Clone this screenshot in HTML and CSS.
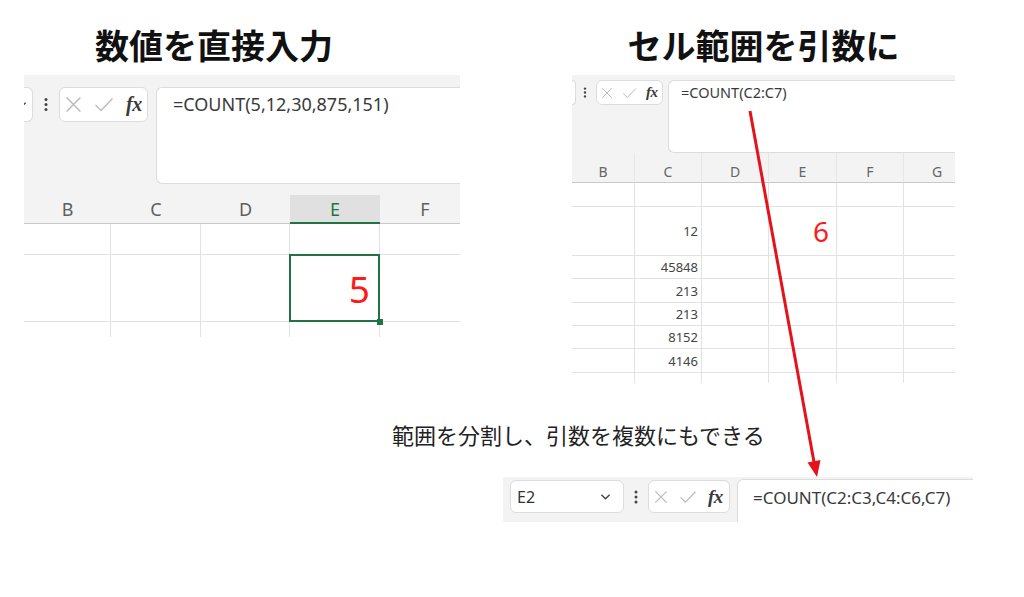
FILE: index.html
```html
<!DOCTYPE html>
<html lang="ja">
<head>
    <meta charset="UTF-8">
    <meta name="viewport" content="width=device-width, initial-scale=1.0">
    <title>COUNT関数</title>
    <link rel="stylesheet" href="styles.css">
</head>
<body>
<div class="page">

    <div class="top">
        <!-- Left: direct values -->
        <section class="col col-left">
            <h2 class="title title-left">数値を直接入力</h2>
            <div class="sheet sheet-lg">
                <div class="fbar">
                    <div class="box stub"><svg class="chev" viewBox="0 0 12 8"><path d="M1.5 1.5 L6 6 L10.5 1.5"/></svg></div>
                    <div class="dots"><svg viewBox="0 0 4 14"><circle cx="2" cy="2" r="1.5"/><circle cx="2" cy="7" r="1.5"/><circle cx="2" cy="12" r="1.5"/></svg></div>
                    <div class="box tools">
                        <svg class="ic-x" viewBox="0 0 16 16"><path d="M1.5 1.5 L14.5 14.5 M14.5 1.5 L1.5 14.5"/></svg>
                        <svg class="ic-ok" viewBox="0 0 20 16"><path d="M1.5 8.5 L7 14 L18.5 2"/></svg>
                        <span class="fx">fx</span>
                    </div>
                    <div class="box formula">=COUNT(5,12,30,875,151)</div>
                </div>
                <div class="heads">
                    <div class="head">B</div>
                    <div class="head">C</div>
                    <div class="head">D</div>
                    <div class="head on">E</div>
                    <div class="head">F</div>
                </div>
                <div class="cells">
                    <div class="cell"></div><div class="cell"></div><div class="cell"></div><div class="cell"></div><div class="cell"></div>
                    <div class="cell"></div><div class="cell"></div><div class="cell"></div><div class="cell sel"><span class="big">5</span></div><div class="cell"></div>
                    <div class="cell last"></div><div class="cell last"></div><div class="cell last"></div><div class="cell last"></div><div class="cell last"></div>
                </div>
            </div>
        </section>

        <!-- Right: cell range -->
        <section class="col col-right">
            <h2 class="title">セル範囲を引数に</h2>
            <div class="sheet sheet-sm">
                <div class="fbar">
                    <div class="box stub"></div>
                    <div class="dots"><svg viewBox="0 0 4 14"><circle cx="2" cy="2" r="1.5"/><circle cx="2" cy="7" r="1.5"/><circle cx="2" cy="12" r="1.5"/></svg></div>
                    <div class="box tools">
                        <svg class="ic-x" viewBox="0 0 16 16"><path d="M1.5 1.5 L14.5 14.5 M14.5 1.5 L1.5 14.5"/></svg>
                        <svg class="ic-ok" viewBox="0 0 20 16"><path d="M1.5 8.5 L7 14 L18.5 2"/></svg>
                        <span class="fx">fx</span>
                    </div>
                    <div class="box formula">=COUNT(C2:C7)</div>
                </div>
                <div class="heads">
                    <div class="head">B</div>
                    <div class="head">C</div>
                    <div class="head">D</div>
                    <div class="head">E</div>
                    <div class="head">F</div>
                    <div class="head">G</div>
                </div>
                <div class="cells">
                    <div class="cell"></div><div class="cell"></div><div class="cell"></div><div class="cell"></div><div class="cell"></div><div class="cell"></div>
                    <div class="cell"></div><div class="cell num">12</div><div class="cell"></div><div class="cell"><span class="mid">6</span></div><div class="cell"></div><div class="cell"></div>
                    <div class="cell"></div><div class="cell num">45848</div><div class="cell"></div><div class="cell"></div><div class="cell"></div><div class="cell"></div>
                    <div class="cell"></div><div class="cell num">213</div><div class="cell"></div><div class="cell"></div><div class="cell"></div><div class="cell"></div>
                    <div class="cell"></div><div class="cell num">213</div><div class="cell"></div><div class="cell"></div><div class="cell"></div><div class="cell"></div>
                    <div class="cell"></div><div class="cell num">8152</div><div class="cell"></div><div class="cell"></div><div class="cell"></div><div class="cell"></div>
                    <div class="cell"></div><div class="cell num">4146</div><div class="cell"></div><div class="cell"></div><div class="cell"></div><div class="cell"></div>
                    <div class="cell last"></div><div class="cell last"></div><div class="cell last"></div><div class="cell last"></div><div class="cell last"></div><div class="cell last"></div>
                </div>
            </div>
        </section>
    </div>

    <p class="caption">範囲を分割し、引数を複数にもできる</p>

    <!-- Bottom formula bar -->
    <div class="fbar bar">
        <div class="box namebox">
            <span>E2</span>
            <svg class="chev" viewBox="0 0 12 8"><path d="M1.5 1.5 L6 6 L10.5 1.5"/></svg>
        </div>
        <div class="dots"><svg viewBox="0 0 4 14"><circle cx="2" cy="2" r="1.5"/><circle cx="2" cy="7" r="1.5"/><circle cx="2" cy="12" r="1.5"/></svg></div>
        <div class="box tools">
            <svg class="ic-x" viewBox="0 0 16 16"><path d="M1.5 1.5 L14.5 14.5 M14.5 1.5 L1.5 14.5"/></svg>
            <svg class="ic-ok" viewBox="0 0 20 16"><path d="M1.5 8.5 L7 14 L18.5 2"/></svg>
            <span class="fx">fx</span>
        </div>
        <div class="box formula">=COUNT(C2:C3,C4:C6,C7)</div>
    </div>

    <!-- Red arrow drawn over the sheet -->
    <svg class="arrow" viewBox="0 0 1024 597">
        <line x1="750" y1="111" x2="814" y2="462"/>
        <polygon points="817,477 820.5,460 807.5,462.5"/>
    </svg>
</div>
</body>
</html>
```

FILE: styles.css
```css
/* General */
* {
    margin: 0;
    padding: 0;
    box-sizing: border-box;
}

body {
    background: #fff;
    font-family: "Noto Sans", "Noto Sans CJK JP", sans-serif;
    color: #222;
}

.page {
    position: relative;
    width: 1024px;
    height: 597px;
    overflow: hidden;
    padding-top: 28px;
}

.top {
    display: flex;
    align-items: flex-start;
}

.col-left {
    margin-left: 24px;
    width: 436px;
}

.col-right {
    margin-left: 112px;
    width: 383px;
}

.title {
    font-family: "Noto Sans CJK JP", sans-serif;
    font-weight: 700;
    font-size: 34px;
    line-height: 34px;
    color: #111;
    text-align: center;
    margin-bottom: 13px;
}

.title-left {
    padding-right: 56px;
}

/* Formula bar pieces */
.sheet {
    background: #f3f3f3;
    overflow: hidden;
}

.fbar {
    display: flex;
    align-items: flex-start;
}

.box {
    background: #fff;
    border: 1px solid #dcdcdc;
    border-radius: 6px;
}

.stub {
    border-left: none;
    border-radius: 0 6px 6px 0;
    overflow: hidden;
    display: flex;
    align-items: center;
}

.stub .chev {
    flex: none;
    margin-left: -8px;
}

.dots {
    display: flex;
    align-items: center;
    justify-content: center;
}

.dots svg {
    width: 4px;
    fill: #444;
}

.tools {
    display: flex;
    align-items: center;
}

.tools svg {
    fill: none;
    stroke: #b9b9b9;
    stroke-width: 1.3;
}

.fx {
    font-family: "Liberation Serif", serif;
    font-style: italic;
    font-weight: 700;
    color: #3a3a3a;
    letter-spacing: -0.5px;
}

.formula {
    flex: 1;
    border-right: none;
    border-radius: 6px 0 0 6px;
    color: #3a3a3a;
    white-space: nowrap;
}

/* Big sheet (left) */
.sheet-lg .fbar {
    height: 109px;
    padding-top: 12px;
}

.sheet-lg .stub {
    width: 9px;
    height: 35px;
}

.sheet-lg .dots {
    width: 4px;
    height: 35px;
    margin: 0 11px;
}

.sheet-lg .dots svg {
    height: 15px;
}

.sheet-lg .tools {
    width: 89px;
    height: 35px;
    padding-left: 5px;
    gap: 12px;
}

.sheet-lg .ic-x { width: 17px; height: 17px; }
.sheet-lg .ic-ok { width: 20px; height: 17px; }
.sheet-lg .fx { font-size: 20px; }

.sheet-lg .formula {
    margin-left: 8px;
    height: 97px;
    font-size: 18px;
    line-height: 22px;
    padding: 5px 16px;
}

.heads {
    display: grid;
}

.head {
    display: flex;
    align-items: center;
    justify-content: center;
    border-bottom: 1px solid #c9c9c9;
    color: #5f5f5f;
}

.head.on {
    background: #e0e0e0;
    border-bottom: 2px solid #217346;
    color: #217346;
}

.sheet-lg .heads {
    grid-template-columns: 87px 90px 89px 90px 90px;
    height: 29px;
    margin-top: 11px;
}

.sheet-lg .head {
    font-size: 18px;
}

.cells {
    display: grid;
    background: #fff;
}

.cell {
    display: flex;
    align-items: center;
    justify-content: flex-end;
    border-right: 1px solid #e2e2e2;
    border-bottom: 1px solid #e2e2e2;
}

.cell.last {
    border-bottom: none;
}

.sheet-lg .cells {
    grid-template-columns: 87px 90px 89px 90px 90px;
    grid-template-rows: 31px 67px 15px;
}

.sel {
    position: relative;
}

.sel::before {
    content: "";
    position: absolute;
    left: -1px;
    top: -1px;
    right: -1px;
    bottom: -1px;
    border: 2px solid #217346;
}

.sel::after {
    content: "";
    position: absolute;
    right: -4px;
    bottom: -4px;
    width: 6px;
    height: 6px;
    background: #217346;
}

.big {
    font-size: 37px;
    line-height: 1;
    color: #ff1a1a;
    padding-right: 9px;
}

/* Small sheet (right) */
.sheet-sm .fbar {
    height: 78px;
    padding-top: 5px;
}

.sheet-sm .stub {
    width: 4px;
    height: 25px;
}

.sheet-sm .dots {
    width: 4px;
    height: 25px;
    margin: 0 9px 0 7px;
}

.sheet-sm .dots svg {
    height: 11px;
}

.sheet-sm .tools {
    width: 67px;
    height: 25px;
    padding-left: 4px;
    gap: 9px;
}

.sheet-sm .ic-x { width: 12px; height: 12px; }
.sheet-sm .ic-ok { width: 15px; height: 12px; }
.sheet-sm .fx { font-size: 15px; }

.sheet-sm .formula {
    margin-left: 5px;
    height: 73px;
    font-size: 14.5px;
    line-height: 18px;
    padding: 2px 12px;
}

.sheet-sm .heads {
    grid-template-columns: 63px 67px 67px 68px 67px 67px;
    height: 30px;
}

.sheet-sm .head {
    font-size: 14px;
    padding-top: 7px;
    border-right: 1px solid #e6e6e6;
    color: #666;
}

.sheet-sm .cells {
    grid-template-columns: 63px 67px 67px 68px 67px 67px;
    grid-template-rows: 24px 49px 23px 24px 23px 23px 24px 10px;
}

.num {
    font-size: 13px;
    color: #444;
    padding-right: 3px;
}

.mid {
    font-size: 28px;
    line-height: 1;
    color: #ff1a1a;
    padding-right: 7px;
}

/* Caption and bottom bar */
.caption {
    margin: 37px 0 0 392px;
    font-family: "Noto Sans CJK JP", sans-serif;
    font-size: 22px;
    line-height: 28px;
    color: #222;
}

.bar {
    margin: 29px 0 0 503px;
    width: 470px;
    height: 45px;
    background: #f3f3f3;
    padding: 3px 0 0 7px;
}

.namebox {
    width: 114px;
    height: 33px;
    display: flex;
    align-items: center;
    justify-content: space-between;
    padding: 0 12px 0 6px;
    font-size: 16px;
    color: #333;
}

.chev {
    width: 11px;
    height: 8px;
    fill: none;
    stroke: #444;
    stroke-width: 1.5;
}

.bar .dots {
    width: 4px;
    height: 33px;
    margin: 0 10px;
}

.bar .dots svg {
    height: 14px;
}

.bar .tools {
    width: 82px;
    height: 33px;
    padding-left: 5px;
    gap: 11px;
}

.bar .ic-x { width: 14px; height: 14px; }
.bar .ic-ok { width: 18px; height: 14px; }
.bar .fx { font-size: 19px; }

.bar .formula {
    margin: -1px 0 0 7px;
    height: 43px;
    border-bottom: none;
    border-radius: 6px 0 0 0;
    font-size: 17px;
    line-height: 22px;
    padding: 7px 15px;
}

/* Arrow overlay */
.arrow {
    position: absolute;
    left: 0;
    top: 0;
    width: 1024px;
    height: 597px;
    pointer-events: none;
}

.arrow line {
    stroke: #e3121b;
    stroke-width: 3;
}

.arrow polygon {
    fill: #e3121b;
}
```
